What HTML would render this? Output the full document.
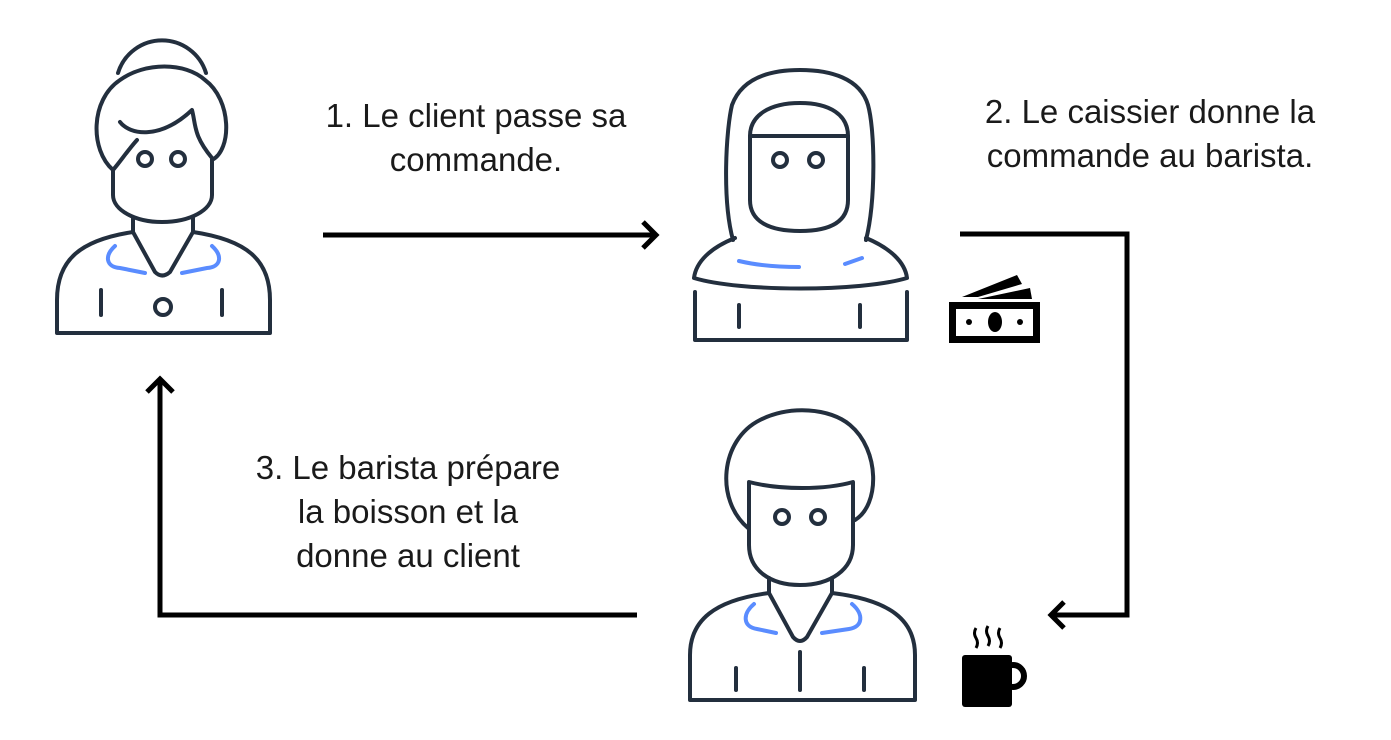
<!DOCTYPE html>
<html><head><meta charset="utf-8"><style>
html,body{margin:0;padding:0;background:#fff;width:1391px;height:740px;overflow:hidden}
svg{display:block}
text{font-family:"Liberation Sans",sans-serif;font-size:33px;fill:#1a1a1a;text-anchor:middle}
</style></head><body>
<svg width="1391" height="740" viewBox="0 0 1391 740">
<g fill="none" stroke="#232f3e" stroke-width="4" stroke-linecap="round" stroke-linejoin="round">
<!-- woman -->
<path d="M118 73 A46 46 0 0 1 206 73"/>
<path d="M113 170 C90 150 90 100 120 80 C145 62 185 62 205 80 C232 100 232 150 212 160"/>
<path d="M120 122 C130 135 160 140 192 110 C196 125 193 135 212 158"/>
<path d="M137 140 C128 150 120 162 113 170"/>
<path d="M113 170 L113 195 C113 210 135 222 162 222 C190 222 212 210 212 195 L212 160"/>
<circle cx="145" cy="159" r="7"/><circle cx="178" cy="159" r="7"/>
<path d="M133 218 V232 L155 272 Q162 279 170 272 L193 232 V218"/>
<path d="M133 232 C80 240 57 260 57 300 V333 H270 V300 C270 260 247 240 193 232"/>
<line x1="101" y1="290" x2="101" y2="315"/><line x1="222" y1="290" x2="222" y2="315"/>
<circle cx="163" cy="307" r="8"/>
<!-- cashier -->
<path d="M733 240 C722 200 726 130 732 105 C742 78 770 70 800 70 C830 70 860 78 868 105 C875 130 876 200 866 240"/>
<path d="M750 136 V200 C750 222 770 231 800 231 C830 231 848 222 848 200 V136 C848 115 830 103 800 103 C770 103 750 115 750 136 Z"/>
<line x1="750" y1="136" x2="848" y2="136"/>
<circle cx="780" cy="160" r="7"/><circle cx="816" cy="160" r="7"/>
<path d="M735 238 C710 248 696 262 694 278 C740 292 860 292 907 278 C905 262 890 248 866 238"/>
<path d="M695 292 V340 H907 V292"/>
<line x1="739" y1="305" x2="739" y2="327"/><line x1="860" y1="305" x2="860" y2="327"/>
<!-- barista -->
<path d="M748 528 C715 500 720 440 760 420 C790 405 830 408 850 425 C880 450 880 505 855 520"/>
<path d="M749 482 C780 490 825 490 853 482 V545 C853 570 830 585 800 585 C770 585 749 570 749 545 Z"/>
<circle cx="782" cy="517" r="7"/><circle cx="818" cy="517" r="7"/>
<path d="M769 578 V593 L793 637 Q800 645 807 637 L832 593 V578"/>
<path d="M769 593 C715 600 690 620 690 655 V700 H915 V655 C915 620 890 600 832 593"/>
<line x1="736" y1="668" x2="736" y2="690"/><line x1="864" y1="668" x2="864" y2="690"/><line x1="800" y1="652" x2="800" y2="690"/>
</g>
<g fill="none" stroke="#5a8cff" stroke-width="4" stroke-linecap="round">
<path d="M115 246 C104 256 106 267 120 268 L145 273"/>
<path d="M212 246 C223 256 221 267 207 268 L182 273"/>
<path d="M739 261 C760 266 780 267 799 267"/>
<path d="M845 264 L862 258"/>
<path d="M754 604 C742 614 743 627 757 629 L776 633"/>
<path d="M852 604 C864 614 863 627 849 629 L822 633"/>
</g>
<!-- arrows -->
<g fill="none" stroke="#000" stroke-width="5">
<line x1="323" y1="235" x2="655" y2="235"/>
<path d="M643 222 L656 235 L643 248"/>
<path d="M960 234 H1127 V615 H1052"/>
<path d="M1064 602 L1051 615 L1064 628"/>
<path d="M637 615 H160 V380"/>
<path d="M147 392 L160 379 L173 392"/>
</g>
<!-- money -->
<rect x="949" y="302" width="91" height="41" fill="#000"/>
<rect x="956" y="309" width="77" height="27" fill="#fff"/>
<ellipse cx="995" cy="322" rx="7" ry="10" fill="#000"/>
<circle cx="969" cy="322" r="3" fill="#000"/><circle cx="1020" cy="322" r="3" fill="#000"/>
<polygon points="962,297 1017,275 1022,284 978,297" fill="#000"/>
<polygon points="978,299 1030,288 1032,299" fill="#000"/>
<!-- mug -->
<rect x="962" y="655" width="50" height="52" rx="3" fill="#000"/>
<circle cx="1013" cy="676" r="11" fill="none" stroke="#000" stroke-width="6"/>
<g fill="none" stroke="#000" stroke-width="3">
<path d="M976 628 q-3 5 0 10 q3 5 0 10"/><path d="M988 626 q-3 5 0 10 q3 5 0 10"/><path d="M1000 628 q-3 5 0 10 q3 5 0 10"/>
</g>
<!-- text -->
<text x="476" y="127">1. Le client passe sa</text>
<text x="476" y="171">commande.</text>
<text x="1150" y="123">2. Le caissier donne la</text>
<text x="1150" y="167">commande au barista.</text>
<text x="408" y="479">3. Le barista prépare</text>
<text x="408" y="523">la boisson et la</text>
<text x="408" y="567">donne au client</text>
</svg>
</body></html>
